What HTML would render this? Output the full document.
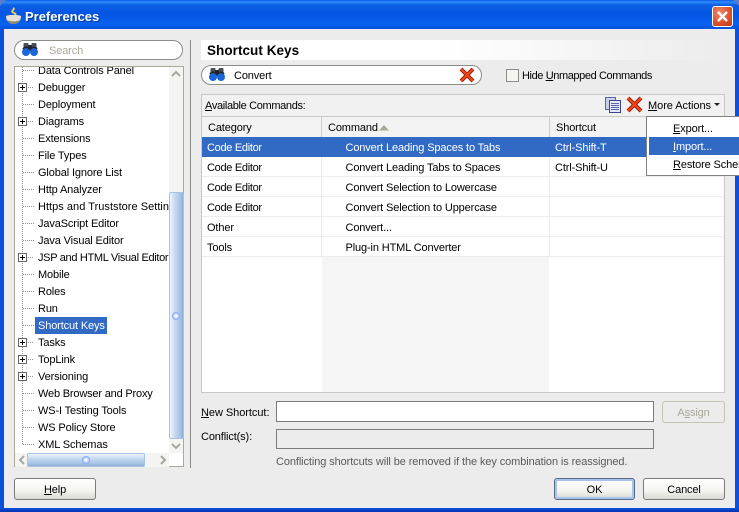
<!DOCTYPE html>
<html><head><meta charset="utf-8"><style>
html,body{margin:0;padding:0;background:#0a4fd8}
#w{position:relative;width:739px;height:512px;overflow:hidden;font:11px "Liberation Sans",sans-serif;letter-spacing:-.13px;color:#000;background:#0a50dc}
#w div,#w svg{position:absolute}
.t{white-space:nowrap;line-height:14px;height:14px;margin-top:1px}
u{text-decoration:underline}
.btn{box-sizing:border-box;border:1px solid #7b7b7b;border-radius:3px;background:linear-gradient(#fff,#f4f4f0 60%,#d8d8d2);text-align:center;line-height:22px}
</style></head><body><div id="w">
<!-- title bar -->
<div style="left:0;top:0;width:739px;height:29px;border-radius:7px 7px 0 0;background:linear-gradient(#0a58e8 0,#2f8cf8 2px,#0c5fe6 5px,#0454e2 14px,#0a62f0 24px,#0550dc 29px)"></div>
<div style="left:0;top:0;width:6px;height:6px;background:#5a7cc8;clip-path:polygon(0 0,100% 0,0 100%)"></div>
<div style="left:733px;top:0;width:6px;height:6px;background:#5a7cc8;clip-path:polygon(0 0,100% 0,100% 100%)"></div>
<div style="left:0;top:29px;width:4px;height:483px;background:#0a50dc"></div>
<div style="left:735px;top:29px;width:4px;height:483px;background:#0a50dc"></div>
<div style="left:0;top:508px;width:739px;height:4px;background:linear-gradient(#0a50dc,#0633b0)"></div>
<svg style="left:5px;top:7px" width="18" height="18" viewBox="0 0 18 18"><path d="M8 1c3 1-3 3 0 4.500s3 1 2 3" stroke="#f0d050" stroke-width="1.800" fill="none"/><path d="M1 9c3-1.500 12-1.500 15 0c0 5-3 8-7.500 8S1 14 1 9z" fill="#e6e0d2"/><path d="M2 13c3 2 10 2 13 0c-1 2.500-3.500 4-6.500 4S3 15.500 2 13z" fill="#8c8270"/></svg>
<div class="t" style="left:25px;top:9px;font-weight:bold;font-size:13px;letter-spacing:-.02px;color:#fff;text-shadow:1px 1px 0 #0a3a9c">Preferences</div>
<div style="left:712px;top:6px;box-sizing:border-box;width:21px;height:21px;border:1px solid #fff;border-radius:3px;background:radial-gradient(circle at 35% 30%,#ee8a68,#d8502a 60%,#c23c1c)"></div>
<svg style="left:712px;top:6px" width="21" height="21" viewBox="0 0 21 21"><path d="M6 6l9 9M15 6l-9 9" stroke="#fff" stroke-width="2.400"/></svg>

<!-- content -->
<div style="left:4px;top:29px;width:731px;height:479px;background:#ececec"></div>

<!-- left search -->
<div style="left:14px;top:40px;box-sizing:border-box;width:169px;height:20px;border:1px solid #8c8c88;border-radius:10px;background:#fff"></div>
<svg style="left:22px;top:42px" width="16" height="15" viewBox="0 0 16 15"><rect x="1.500" y="1" width="5" height="6" rx="1" fill="#4a4e56"/><rect x="9.500" y="1" width="5" height="6" rx="1" fill="#4a4e56"/><rect x="6" y="3" width="4" height="6" fill="#23262c"/><circle cx="4" cy="10" r="4" fill="#1b66d8"/><circle cx="12" cy="10" r="4" fill="#1b66d8"/><path d="M1 7a3.500 3.500 0 016 0M9 7a3.500 3.500 0 016 0" stroke="#24272d" stroke-width="1.500" fill="none"/></svg>
<div class="t" style="left:49px;top:43px;color:#aca899">Search</div>

<!-- tree -->
<div style="left:14px;top:66px;box-sizing:border-box;width:170px;height:401px;border:1px solid #aca899;background:#fff;overflow:hidden"></div>
<svg style="left:15px;top:67px" width="22" height="378" viewBox="0 0 22 378"><g stroke="#909090" stroke-dasharray="1 1" fill="none"><path d="M7.500 0V377.500"/><path d="M8 3.500H19M13 20.500H19M8 37.500H19M13 54.500H19M8 71.500H19M8 88.500H19M8 105.500H19M8 122.500H19M8 139.500H19M8 156.500H19M8 173.500H19M13 190.500H19M8 207.500H19M8 224.500H19M8 241.500H19M8 258.500H19M13 275.500H19M13 292.500H19M13 309.500H19M8 326.500H19M8 343.500H19M8 360.500H19M8 377.500H19"/></g>
<g><g fill="#fff" stroke="#666"><rect x="3.500" y="16.500" width="8" height="8"/><rect x="3.500" y="50.500" width="8" height="8"/><rect x="3.500" y="186.500" width="8" height="8"/><rect x="3.500" y="271.500" width="8" height="8"/><rect x="3.500" y="288.500" width="8" height="8"/><rect x="3.500" y="305.500" width="8" height="8"/></g>
<path stroke="#000" d="M5 20.500h5M7.500 18v5M5 54.500h5M7.500 52v5M5 190.500h5M7.500 188v5M5 275.500h5M7.500 273v5M5 292.500h5M7.500 290v5M5 309.500h5M7.500 307v5"/></g></svg>
<div style="left:15px;top:67px;width:154px;height:386px;overflow:hidden">
<div class="t" style="left:23px;top:-4px">Data Controls Panel</div>
<div class="t" style="left:23px;top:13px">Debugger</div>
<div class="t" style="left:23px;top:30px">Deployment</div>
<div class="t" style="left:23px;top:47px">Diagrams</div>
<div class="t" style="left:23px;top:64px">Extensions</div>
<div class="t" style="left:23px;top:81px">File Types</div>
<div class="t" style="left:23px;top:98px">Global Ignore List</div>
<div class="t" style="left:23px;top:115px">Http Analyzer</div>
<div class="t" style="left:23px;top:132px;letter-spacing:.03px">Https and Truststore Settin</div>
<div class="t" style="left:23px;top:149px">JavaScript Editor</div>
<div class="t" style="left:23px;top:166px">Java Visual Editor</div>
<div class="t" style="left:23px;top:183px;letter-spacing:-.32px">JSP and HTML Visual Editor</div>
<div class="t" style="left:23px;top:200px">Mobile</div>
<div class="t" style="left:23px;top:217px">Roles</div>
<div class="t" style="left:23px;top:234px">Run</div>
<div style="left:20px;top:250px;width:72px;height:17px;background:#316ac5"></div>
<div class="t" style="left:23px;top:251px;color:#fff">Shortcut Keys</div>
<div class="t" style="left:23px;top:268px">Tasks</div>
<div class="t" style="left:23px;top:285px">TopLink</div>
<div class="t" style="left:23px;top:302px">Versioning</div>
<div class="t" style="left:23px;top:319px;letter-spacing:-.18px">Web Browser and Proxy</div>
<div class="t" style="left:23px;top:336px">WS-I Testing Tools</div>
<div class="t" style="left:23px;top:353px">WS Policy Store</div>
<div class="t" style="left:23px;top:370px">XML Schemas</div>
</div>
<!-- v scrollbar -->
<div style="left:169px;top:67px;width:14px;height:386px;background:#f4f4f2"></div>
<div style="left:169px;top:192px;box-sizing:border-box;width:15px;height:247px;background:linear-gradient(90deg,#eef4fc,#c4d8f0 40%,#a6c2e4 80%,#8eaed8);border:1px solid #a8c2e2;border-radius:2px"></div>
<div style="left:172px;top:312px;width:8px;height:8px;border-radius:4px;background:radial-gradient(#fff 15%,#6f9cf0 75%)"></div>
<svg style="left:169px;top:67px" width="15" height="386" viewBox="0 0 15 386"><path d="M3 9l4-4 4 4" stroke="#a8a8a0" stroke-width="2" fill="none"/><path d="M3 377l4 4 4-4" stroke="#a8a8a0" stroke-width="2" fill="none"/></svg>
<!-- h scrollbar -->
<div style="left:15px;top:453px;width:154px;height:14px;background:#f4f4f2"></div>
<div style="left:27px;top:453px;box-sizing:border-box;width:118px;height:14px;background:linear-gradient(#eef4fc,#c4d8f0 40%,#a6c2e4 80%,#8eaed8);border:1px solid #a8c2e2;border-radius:2px"></div>
<div style="left:82px;top:456px;width:8px;height:8px;border-radius:4px;background:radial-gradient(#fff 15%,#6f9cf0 75%)"></div>
<svg style="left:15px;top:453px" width="154" height="14" viewBox="0 0 154 14"><path d="M9 3L5 7l4 4" stroke="#a8a8a0" stroke-width="2" fill="none"/><path d="M146 3l4 4-4 4" stroke="#a8a8a0" stroke-width="2" fill="none"/></svg>
<!-- divider -->
<div style="left:190px;top:40px;width:1px;height:428px;background:#8c8c8c"></div>

<!-- heading -->
<div style="left:201px;top:40px;width:523px;height:20px;background:linear-gradient(90deg,#fff,#fff 45%,#ececec 100%)"></div>
<div class="t" style="left:207px;top:43px;font-weight:bold;font-size:13.500px;letter-spacing:.05px">Shortcut Keys</div>

<!-- filter -->
<div style="left:201px;top:65px;box-sizing:border-box;width:281px;height:20px;border:1px solid #8c8c88;border-radius:10px;background:#fff"></div>
<svg style="left:209px;top:67px" width="16" height="15" viewBox="0 0 16 15"><rect x="1.500" y="1" width="5" height="6" rx="1" fill="#4a4e56"/><rect x="9.500" y="1" width="5" height="6" rx="1" fill="#4a4e56"/><rect x="6" y="3" width="4" height="6" fill="#23262c"/><circle cx="4" cy="10" r="4" fill="#1b66d8"/><circle cx="12" cy="10" r="4" fill="#1b66d8"/><path d="M1 7a3.500 3.500 0 016 0M9 7a3.500 3.500 0 016 0" stroke="#24272d" stroke-width="1.500" fill="none"/></svg>
<div class="t" style="left:234px;top:68px">Convert</div>
<svg style="left:459px;top:67px" width="16" height="16" viewBox="0 0 16 16"><path d="M2 2l12 12M14 2L2 14" stroke="#7c1808" stroke-width="4"/><path d="M2 2l12 12M14 2L2 14" stroke="#f04418" stroke-width="2.400"/></svg>
<div style="left:506px;top:69px;box-sizing:border-box;width:13px;height:13px;border:1px solid #8c8c88;background:#f4f4f2"></div>
<div class="t" style="left:522px;top:68px;letter-spacing:-.4px">Hide <u>U</u>nmapped Commands</div>

<!-- table panel -->
<div style="left:201px;top:94px;box-sizing:border-box;width:524px;height:299px;border:1px solid #c8c8c8;background:#fff"></div>
<div style="left:202px;top:95px;width:522px;height:21px;background:#f1f1f1;border-bottom:1px solid #c8c8c8"></div>
<div class="t" style="left:205px;top:98px;letter-spacing:-.34px"><u>A</u>vailable Commands:</div>
<svg style="left:604px;top:96px" width="18" height="18" viewBox="0 0 18 18"><rect x="1.500" y="1.500" width="10" height="12" fill="#c8d0ec" stroke="#5c64a8"/><rect x="5.500" y="4.500" width="11" height="12" fill="#e4e8f8" stroke="#3c4494"/><path d="M7 7.500h8M7 9.500h8M7 11.500h8M7 13.500h8" stroke="#5c64a8"/></svg>
<svg style="left:626px;top:96px" width="17" height="17" viewBox="0 0 17 17"><path d="M2 2l13 13M15 2L2 15" stroke="#7c1808" stroke-width="4"/><path d="M2 2l13 13M15 2L2 15" stroke="#f04418" stroke-width="2.500"/></svg>
<div class="t" style="left:648px;top:98px;letter-spacing:-.05px"><u>M</u>ore Actions</div>
<svg style="left:714px;top:103px" width="7" height="4"><path d="M0 0h6L3 3z" fill="#222"/></svg>

<!-- header -->
<div style="left:202px;top:117px;width:522px;height:20px;background:#f3f3f3"></div>
<div style="left:321px;top:117px;width:1px;height:20px;background:#d0d0d0"></div>
<div style="left:549px;top:117px;width:1px;height:20px;background:#d0d0d0"></div>
<div class="t" style="left:208px;top:120px">Category</div>
<div class="t" style="left:328px;top:120px">Command</div>
<svg style="left:379px;top:124px" width="11" height="7"><path d="M0 6.500L5 1l5 5.500z" fill="#aca899"/></svg>
<div class="t" style="left:556px;top:120px">Shortcut</div>

<!-- rows -->
<div style="left:322px;top:157px;width:227px;height:235px;background:#f5f5f5"></div>
<div style="left:202px;top:137px;width:522px;height:20px;background:#316ac5"></div>
<div style="left:322px;top:157px;width:227px;height:100px;background:#fff"></div>
<div style="left:321px;top:157px;width:1px;height:100px;background:#ececec"></div>
<div style="left:549px;top:157px;width:1px;height:100px;background:#ececec"></div>
<div style="left:202px;top:176px;width:522px;height:1px;background:#ececec"></div>
<div style="left:202px;top:196px;width:522px;height:1px;background:#ececec"></div>
<div style="left:202px;top:216px;width:522px;height:1px;background:#ececec"></div>
<div style="left:202px;top:236px;width:522px;height:1px;background:#ececec"></div>
<div style="left:202px;top:256px;width:522px;height:1px;background:#ececec"></div>
<div class="t" style="left:207px;top:140px;color:#fff;letter-spacing:-.3px">Code Editor</div><div class="t" style="left:345.500px;top:140px;color:#fff">Convert Leading Spaces to Tabs</div><div class="t" style="left:555px;top:140px;color:#fff">Ctrl-Shift-T</div>
<div class="t" style="left:207px;top:160px;letter-spacing:-.3px">Code Editor</div><div class="t" style="left:345.500px;top:160px">Convert Leading Tabs to Spaces</div><div class="t" style="left:555px;top:160px">Ctrl-Shift-U</div>
<div class="t" style="left:207px;top:180px;letter-spacing:-.3px">Code Editor</div><div class="t" style="left:345.500px;top:180px">Convert Selection to Lowercase</div>
<div class="t" style="left:207px;top:200px;letter-spacing:-.3px">Code Editor</div><div class="t" style="left:345.500px;top:200px">Convert Selection to Uppercase</div>
<div class="t" style="left:207px;top:220px">Other</div><div class="t" style="left:345.500px;top:220px">Convert...</div>
<div class="t" style="left:207px;top:240px">Tools</div><div class="t" style="left:345.500px;top:240px">Plug-in HTML Converter</div>

<!-- menu -->
<div style="left:646px;top:116px;box-sizing:border-box;width:100px;height:60px;border:1px solid #808080;background:#fff"></div>
<div style="left:649px;top:137px;width:90px;height:18px;background:#316ac5"></div>
<div class="t" style="left:673px;top:121px"><u>E</u>xport...</div>
<div class="t" style="left:673px;top:139px;color:#fff"><u>I</u>mport...</div>
<div class="t" style="left:673px;top:157px"><u>R</u>estore Schemes</div>

<!-- form -->
<div class="t" style="left:201px;top:405px;letter-spacing:-.05px"><u>N</u>ew Shortcut:</div>
<div style="left:276px;top:401px;box-sizing:border-box;width:378px;height:21px;border:1px solid #7b7b7b;background:#fff"></div>
<div class="btn" style="left:662px;top:401px;width:63px;height:22px;border-color:#c4c4b0;background:#ececec;color:#a8a898">A<u>s</u>sign</div>
<div class="t" style="left:201px;top:429px">Conflict(s):</div>
<div style="left:276px;top:429px;box-sizing:border-box;width:378px;height:20px;border:1px solid #7b7b7b;background:#ececec"></div>
<div class="t" style="left:276px;top:454px;color:#5a5a5a;letter-spacing:-.1px">Conflicting shortcuts will be removed if the key combination is reassigned.</div>

<!-- buttons -->
<div class="btn" style="left:14px;top:478px;width:82px;height:22px"><u>H</u>elp</div>
<div class="btn" style="left:554px;top:478px;width:81px;height:22px;border-color:#5a6a84;box-shadow:inset 0 0 0 2px #a8c4ec">OK</div>
<div class="btn" style="left:643px;top:478px;width:82px;height:22px">Cancel</div>
</div></body></html>
